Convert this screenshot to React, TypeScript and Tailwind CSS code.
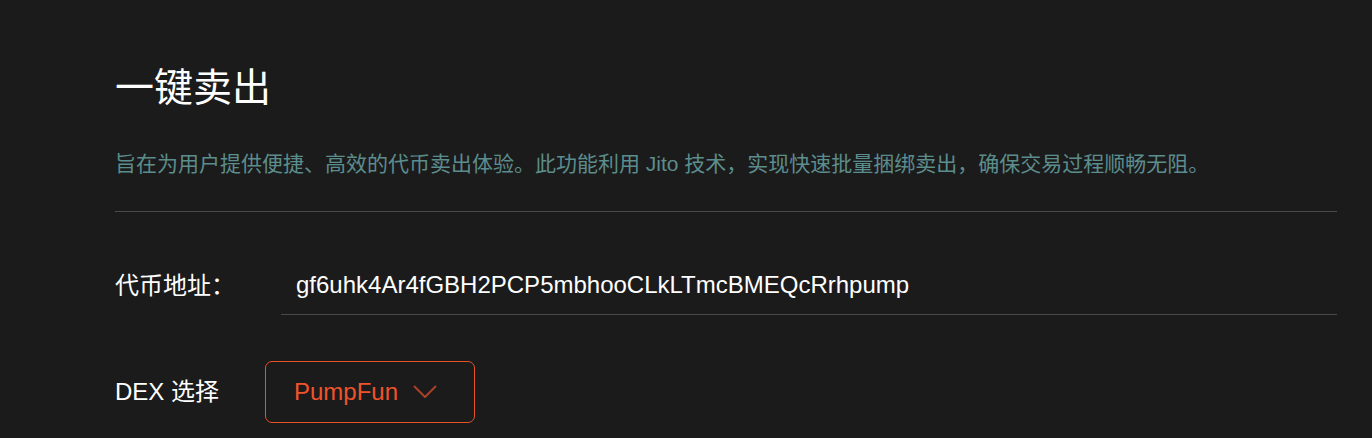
import React from "react";

export default function App() {
  return (
    <div
      className="w-[1372px] h-[438px] bg-[#1b1b1b] overflow-hidden"
      style={{ fontFamily: '"Liberation Sans", "Noto Sans CJK SC", sans-serif' }}
    >
      <div className="pl-[115px] pr-[35px] pt-[64px]">
        <h1 className="text-[39px] leading-[48px] text-white font-normal">一键卖出</h1>
        <p className="mt-[37px] text-[21px] leading-[30px] text-[#5b8d8d]">
          旨在为用户提供便捷、高效的代币卖出体验。此功能利用 Jito 技术，实现快速批量捆绑卖出，确保交易过程顺畅无阻。
        </p>
        <div className="mt-[32px] h-px bg-[#4a4a4a]" />
        <div className="mt-[44px] flex items-center">
          <div className="w-[166px] text-[24px] leading-[32px] text-white">代币地址：</div>
          <div className="flex-1 border-b border-[#4a4a4a] pl-[15px] pt-[13px] pb-[13px] text-[24px] leading-[32px] text-white">
            gf6uhk4Ar4fGBH2PCP5mbhooCLkLTmcBMEQcRrhpump
          </div>
        </div>
        <div className="mt-[46px] flex items-center">
          <div className="w-[150px] text-[24px] leading-[32px] text-white">DEX 选择</div>
          <div className="w-[210px] h-[62px] border border-[#e8512a] rounded-[7px] flex items-center pl-[28px]">
            <span className="text-[24px] leading-[32px] text-[#f0532b]">PumpFun</span>
            <svg className="ml-[15px]" width="24" height="14" viewBox="0 0 24 14" fill="none">
              <path d="M1.5 1.5 L12 12 L22.5 1.5" stroke="#a8402a" strokeWidth="2" strokeLinecap="round" strokeLinejoin="round" />
            </svg>
          </div>
        </div>
      </div>
    </div>
  );
}
